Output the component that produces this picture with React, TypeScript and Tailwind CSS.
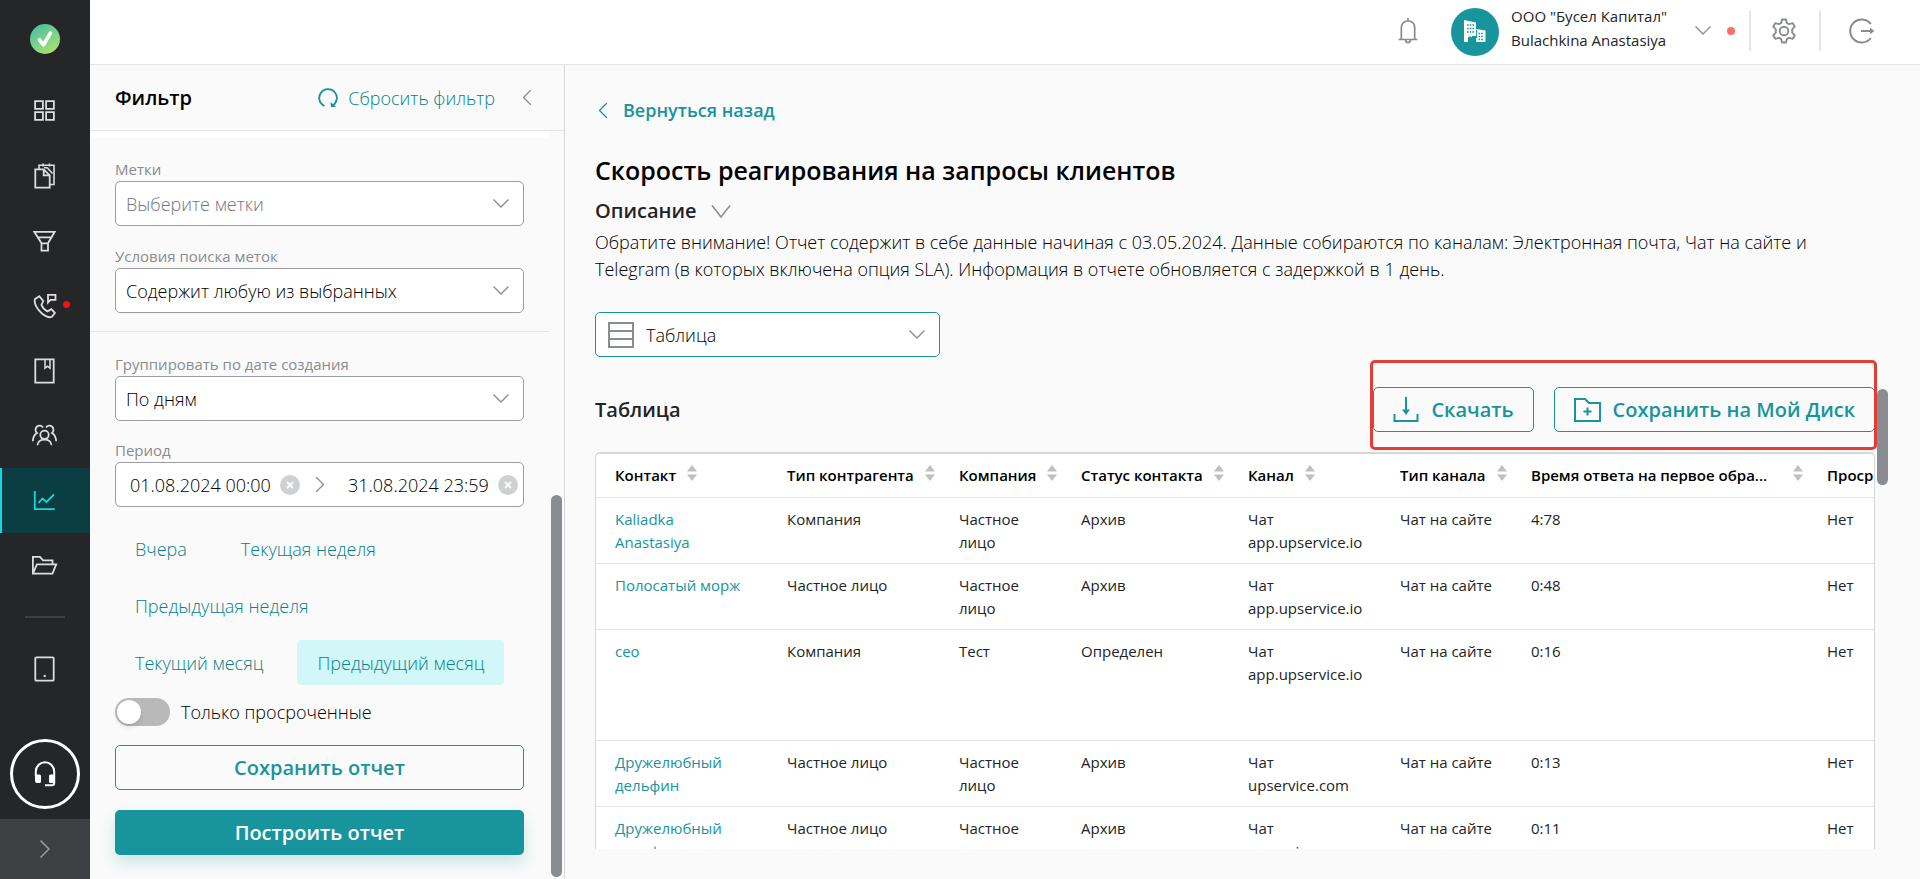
import { useState } from "react";
import type { ReactNode } from "react";

interface Row {
  contact: string;
  kind: string;
  company: string;
  status: string;
  channel: string;
  channelType: string;
  time: string;
  overdue: string;
  tall?: boolean;
}

const rows: Row[] = [
  { contact: "Kaliadka Anastasiya", kind: "Компания", company: "Частное лицо", status: "Архив", channel: "Чат app.upservice.io", channelType: "Чат на сайте", time: "4:78", overdue: "Нет" },
  { contact: "Полосатый морж", kind: "Частное лицо", company: "Частное лицо", status: "Архив", channel: "Чат app.upservice.io", channelType: "Чат на сайте", time: "0:48", overdue: "Нет" },
  { contact: "ceo", kind: "Компания", company: "Тест", status: "Определен", channel: "Чат app.upservice.io", channelType: "Чат на сайте", time: "0:16", overdue: "Нет", tall: true },
  { contact: "Дружелюбный дельфин", kind: "Частное лицо", company: "Частное лицо", status: "Архив", channel: "Чат upservice.com", channelType: "Чат на сайте", time: "0:13", overdue: "Нет" },
  { contact: "Дружелюбный дельфин", kind: "Частное лицо", company: "Частное лицо", status: "Архив", channel: "Чат upservice.com", channelType: "Чат на сайте", time: "0:11", overdue: "Нет" },
];

const columns = [
  { title: "Контакт", width: "w-[172px]" },
  { title: "Тип контрагента", width: "w-[172px]" },
  { title: "Компания", width: "w-[122px]" },
  { title: "Статус контакта", width: "w-[167px]" },
  { title: "Канал", width: "w-[152px]" },
  { title: "Тип канала", width: "w-[131px]" },
  { title: "Время ответа на первое обра...", width: "w-[296px]", spread: true },
  { title: "Просрочено", width: "w-[160px]" },
];

const periodRows = [["Вчера", "Текущая неделя"], ["Предыдущая неделя"], ["Текущий месяц", "Предыдущий месяц"]];

function Chevron({ className = "" }: { className?: string }) {
  return (
    <svg viewBox="0 0 16 9" fill="none" stroke="currentColor" strokeWidth="1.3" className={className} aria-hidden="true">
      <path d="M.5.5 8 8 15.5.5" />
    </svg>
  );
}

function NavIcon({ children }: { children: ReactNode }) {
  return (
    <svg width="26" height="26" viewBox="0 0 26 26" fill="none" stroke="currentColor" strokeWidth="1.8" aria-hidden="true">
      {children}
    </svg>
  );
}

const navItems: { label: string; icon: ReactNode; active?: boolean; dot?: boolean }[] = [
  {
    label: "Рабочий стол",
    icon: (
      <path d="M3.1 3.1h7.8v7.8H3.1zM14.1 3.1h7.8v7.8h-7.8zM3.1 14.1h7.8v7.8H3.1zM14.1 14.1h7.8v7.8h-7.8z" />
    ),
  },
  {
    label: "Задачи",
    icon: (
      <>
        <path d="M3.3 6.3h8.4l6 6v12.4H3.3zM11.7 6.3v6h6" />
        <path d="M7 6V2.3h15v19.2h-4M11 .5v3M17.5.5v3M12 4.5l3.500.5 5 5.500" strokeWidth="1.6" />
      </>
    ),
  },
  {
    label: "Воронка",
    icon: <path d="M2.3 3.8h20.4L16 15.3v7.4H9.5v-7.4zM5.5 9.3h14M9 15.3h7.5" />,
  },
  {
    label: "Обращения",
    dot: true,
    icon: (
      <>
        <path d="M7.3 3.3 2.9 6.2C1.6 10 5.2 16.3 9.4 20c3.9 3.3 8 5 10.6 3.8l2.9-3.9-3.5-3.8-4 2.3c-2.6-1.3-5.1-4-6-6.6l1.9-3.6z" />
        <path d="M16 9.5V1.8h7.5v5h-5z" />
      </>
    ),
  },
  {
    label: "Справочник",
    icon: (
      <>
        <path d="M3.3 1.3h18.4v23.4H3.3z" />
        <path d="M13 1.5v8.7l2.5-2 2.5 2V1.5" strokeWidth="1.5" />
      </>
    ),
  },
  {
    label: "Команда",
    icon: (
      <>
        <circle cx="12.5" cy="11.8" r="4.2" />
        <path d="M5.5 22.3c.2-3.6 3.2-5.8 7-5.8s6.8 2.2 7 5.8" />
        <path d="M11 4.6C9.7 2.3 6.8 2 5 3.5c-2 1.7-2 4.7 0 6.5-2.5 1.5-4 4.500-4.200 8.200M14 4.600c1.300-2.300 4.200-2.600 6-1.100 2 1.700 2 4.700 0 6.500 2.500 1.500 4 4.500 4.200 8.200" />
      </>
    ),
  },
  {
    label: "Аналитика",
    active: true,
    icon: <path d="M2.8 3v18.2h20M6.5 15l4-4.5 4 3.5 7.5-7.5" />,
  },
  {
    label: "Диск",
    icon: <path d="M.9 20.7V3.8H8l3 3.5h9.5v4M.9 20.7l4-9.4h19.3l-3.7 9.4z" />,
  },
];

function Sidebar() {
  return (
    <aside className="flex w-[90px] shrink-0 flex-col bg-[#242628] text-[#dcdde0]">
      <div className="flex h-[78px] items-center justify-center">
        <svg width="30" height="30" viewBox="0 0 30 30" aria-label="Upservice">
          <defs>
            <linearGradient id="logo" x1="0.2" y1="0" x2="0.8" y2="1">
              <stop offset="0" stopColor="#45bfa4" />
              <stop offset="1" stopColor="#b0e36b" />
            </linearGradient>
          </defs>
          <circle cx="15" cy="15" r="15" fill="url(#logo)" />
          <path d="m9.5 16 4 4.8L20.5 9" fill="none" stroke="#fff" strokeWidth="3.6" strokeLinecap="round" strokeLinejoin="round" />
        </svg>
      </div>
      <nav>
        {navItems.map((item) => (
          <a
            key={item.label}
            href="#"
            aria-label={item.label}
            className={`relative flex h-[65px] items-center justify-center ${
              item.active ? "border-l-2 border-[#1bd5dd] bg-[#0b3e42] pr-0.5 text-[#1bd5dd]" : ""
            }`}
          >
            <NavIcon>{item.icon}</NavIcon>
            {item.dot && <span className="absolute top-7 right-5 size-[7px] rounded-full bg-[#fb0f0f]" />}
          </a>
        ))}
        <hr className="mx-auto mt-[18px] w-10 border-t-2 border-[#3e3f43]" />
        <a href="#" aria-label="Приложение" className="mt-[18px] flex h-[65px] items-center justify-center">
          <NavIcon>
            <rect x="3.3" y="1.3" width="18.4" height="23.4" rx="1" />
            <path d="M11.7 20h2" strokeWidth="2.2" />
          </NavIcon>
        </a>
      </nav>
      <div className="mt-auto flex justify-center pb-[10px]">
        <button aria-label="Поддержка" className="flex size-[70px] items-center justify-center rounded-full border-3 border-white text-white">
          <svg width="22" height="26" viewBox="0 0 22 26" fill="none" stroke="currentColor" aria-hidden="true">
            <path d="M1.8 15v-4.500a9.200 9.200 0 0 1 18.400 0V22q0 2.300-2.500 2.300H11" strokeWidth="2" />
            <path d="M1 13.500h4.500q1.500 0 1.500 1.500v5.500q0 1.500-1.500 1.500H3q-2 0-2-2.500zM21 13.500h-4.500q-1.500 0-1.500 1.500v5.500q0 1.500 1.500 1.500H21z" fill="currentColor" stroke="none" />
          </svg>
        </button>
      </div>
      <button aria-label="Развернуть меню" className="flex h-[60px] items-center justify-center bg-[#3e3f43] text-[#9a9ca1]">
        <Chevron className="w-[18px] -rotate-90" />
      </button>
    </aside>
  );
}

function Header() {
  return (
    <header className="flex h-[65px] shrink-0 items-center justify-end border-b border-[#e4e5e6] bg-white pr-[45px] pb-[3px] text-[#898c90]">
      <button aria-label="Уведомления">
        <svg width="20" height="26" viewBox="0 0 20 26" fill="none" stroke="currentColor" strokeWidth="1.7" aria-hidden="true">
          <path d="M10 0v3M3.3 21V10C3.3 5.5 6 3 10 3s6.700 2.500 6.700 7v11M.5 21.500h19M7.500 22c0 3.500 5 3.500 5 0" />
        </svg>
      </button>
      <span className="mt-[3px] ml-[33px] flex size-12 items-center justify-center rounded-full bg-[#18949c]">
        <svg width="24" height="24" viewBox="0 0 24 24" aria-hidden="true">
          <path d="M1 0l12 2.500V9l9.500 1.500V22H13v-6H9v6H1z" fill="#fff" />
          <path d="M4 5h7M4 8.500h7M4 12h7M15.500 13.500h5.500M15.500 16.500h5.500M15.500 19.500h5.500" stroke="#18949c" strokeWidth="1.5" strokeDasharray="1.6 1.1" />
          <path d="M13.500 10v8" stroke="#18949c" strokeWidth="1" />
          <path d="M5 22v-4q0-1.500 1.500-1.500h1q1.500 0 1.500 1.500v4z" fill="#18949c" />
        </svg>
      </span>
      <div className="ml-3 pb-1.5 text-[15px] leading-6 text-[#222426]">
        <p>ООО "Бусел Капитал"</p>
        <p>Bulachkina Anastasiya</p>
      </div>
      <button aria-label="Сменить компанию" className="ml-7">
        <Chevron className="w-4" />
      </button>
      <span className="ml-4 size-2 rounded-full bg-[#ff6d69]" />
      <span className="ml-[14px] h-10 w-0.5 bg-[#e4e5e6]" />
      <button aria-label="Настройки" className="ml-5">
        <svg width="26" height="26" viewBox="0 0 26 26" fill="none" stroke="currentColor" strokeWidth="1.9" strokeLinejoin="round" aria-hidden="true">
          <circle cx="13" cy="13" r="4.3" />
          <path d="M11 1.5h4l.8 3.4 2.2 1.300 3.800-1 2 3.500-2.600 2.600v3.400l2.600 2.600-2 3.500-3.800-1-2.200 1.300-.8 3.400h-4l-.8-3.400L8 19.800l-3.800 1-2-3.500 2.600-2.600v-3.400L2.200 8.700l2-3.500 3.800 1 2.200-1.300z" />
        </svg>
      </button>
      <span className="ml-[22px] h-10 w-0.5 bg-[#e4e5e6]" />
      <button aria-label="Выйти" className="ml-7">
        <svg width="26" height="26" viewBox="0 0 26 26" fill="none" stroke="currentColor" strokeWidth="2" aria-hidden="true">
          <path d="M21.800 6a11.500 11.500 0 1 0 0 14M12 13h11" />
          <path d="m21 9.800 4.500 3.200-4.500 3.200z" fill="currentColor" stroke="none" />
        </svg>
      </button>
    </header>
  );
}

function SelectField({ id, label, value, muted }: { id: string; label: string; value: string; muted?: boolean }) {
  return (
    <div>
      <label htmlFor={id} className="block text-[15px] leading-6 text-[#898c90]">
        {label}
      </label>
      <div className="relative">
        <select
          id={id}
          className={`h-[45px] w-full appearance-none rounded-[5px] border border-[#9a9ca0] bg-white px-[10px] text-lg font-light ${
            muted ? "text-[#73767a]" : "text-black"
          }`}
        >
          <option>{value}</option>
        </select>
        <Chevron className="pointer-events-none absolute top-[18px] right-[15px] w-4 text-[#898c90]" />
      </div>
    </div>
  );
}

function ClearButton() {
  return (
    <button aria-label="Очистить" className="flex size-5 shrink-0 items-center justify-center rounded-full bg-[#cfd0d2]">
      <svg width="8" height="8" viewBox="0 0 8 8" stroke="#fff" strokeWidth="1.8" aria-hidden="true">
        <path d="m1 1 6 6M7 1 1 7" />
      </svg>
    </button>
  );
}

function FilterPanel() {
  const [period, setPeriod] = useState("Предыдущий месяц");
  const [from, setFrom] = useState("01.08.2024 00:00");
  const [to, setTo] = useState("31.08.2024 23:59");

  return (
    <section className="relative flex w-[475px] shrink-0 flex-col border-r border-[#d6d7d9]">
      <div className="flex h-[66px] shrink-0 items-center border-b border-[#e4e5e6] pr-[29px] pl-[25px]">
        <h2 className="text-xl font-semibold text-black">Фильтр</h2>
        <button className="ml-auto flex items-center gap-[10px] text-lg font-light text-[#04838b]">
          <svg width="20" height="20" viewBox="0 0 20 20" fill="none" stroke="#18949c" strokeWidth="1.8" aria-hidden="true">
            <path d="M6.500 18A8.800 8.800 0 1 1 14 17.800" />
            <path d="m12.500 14 .5 5h5z" fill="#18949c" stroke="none" />
          </svg>
          Сбросить фильтр
        </button>
        <button aria-label="Свернуть фильтр" className="ml-6 text-[#898c90]">
          <Chevron className="w-4 rotate-90" />
        </button>
      </div>

      <div className="mr-[15px] h-[7px] shrink-0 bg-white" />
      <div className="mr-[15px] border-b border-[#e4e5e6] pt-[19px] pb-[18px]">
        <div className="flex flex-col gap-[18px] pr-[25px] pl-[25px]">
          <SelectField id="tags" label="Метки" value="Выберите метки" muted />
          <SelectField id="tag-mode" label="Условия поиска меток" value="Содержит любую из выбранных" />
        </div>
      </div>

      <div className="pt-5 pr-10 pl-[25px]">
        <SelectField id="group-by" label="Группировать по дате создания" value="По дням" />

        <label htmlFor="date-from" className="mt-[17px] block text-[15px] leading-6 text-[#898c90]">
          Период
        </label>
        <div className="flex h-[45px] items-center rounded-[5px] border border-[#9a9ca0] bg-white pr-[5px] pl-[14px] text-black">
          <input id="date-from" value={from} onChange={(e) => setFrom(e.target.value)} className="w-[150px] text-lg font-light outline-none" />
          <ClearButton />
          <Chevron className="ml-3 w-4 -rotate-90 text-[#898c90]" />
          <input aria-label="Конец периода" value={to} onChange={(e) => setTo(e.target.value)} className="ml-5 w-[150px] min-w-0 flex-1 text-lg font-light outline-none" />
          <ClearButton />
        </div>

        <div className="mt-[19px] flex flex-col gap-3">
          {periodRows.map((group) => (
            <div key={group[0]} className="flex gap-[14px]">
              {group.map((p) => (
                <button
                  key={p}
                  onClick={() => setPeriod(p)}
                  className={`h-[45px] rounded-[5px] px-5 text-lg font-light text-[#04838b] ${p === period ? "bg-[#d1f7f9]" : ""}`}
                >
                  {p}
                </button>
              ))}
            </div>
          ))}
        </div>

        <label className="mt-[13px] flex items-center gap-[11px] text-lg font-light text-black">
          <input
            type="checkbox"
            role="switch"
            className="h-7 w-[55px] appearance-none rounded-full bg-[#b9b9b9] p-0.5 before:block before:size-6 before:rounded-full before:bg-white before:shadow-md checked:bg-[#18949c] checked:before:ml-auto"
          />
          Только просроченные
        </label>

        <button className="mt-[19px] h-[45px] w-full rounded-[5px] border border-[#18949c] text-xl font-semibold text-[#18949c]">
          Сохранить отчет
        </button>
        <button className="mt-5 h-[45px] w-full rounded-[5px] bg-[#18949c] text-xl font-semibold text-white shadow-[0_8px_16px_rgba(24,148,156,0.2)]">
          Построить отчет
        </button>
      </div>
      <div className="absolute right-0.5 bottom-0.5 h-[382px] w-[11px] rounded-full bg-[#898c90]" />
    </section>
  );
}

function SortIcon() {
  return (
    <svg width="10" height="16" viewBox="0 0 10 16" fill="#bfbfbf" className="mb-1 shrink-0" aria-hidden="true">
      <path d="M5 0l5 6.500H0zM5 16l5-6.500H0z" />
    </svg>
  );
}

function ReportTable() {
  return (
    <div className="overflow-hidden rounded-t-[5px] border border-t-2 border-b-0 border-[#d6d7d9] bg-white">
      <table className="w-[1372px] table-fixed border-collapse text-left text-[15px] leading-[23px] text-[#222426]">
        <thead>
          <tr className="h-[43px] border-b border-[#e4e5e6]">
            {columns.map((col) => (
              <th key={col.title} className={`${col.width} pl-[19px] font-semibold whitespace-nowrap text-black`}>
                <div className={`flex items-center gap-[11px] ${col.spread ? "justify-between pr-[5px]" : ""}`}>
                  {col.title}
                  <SortIcon />
                </div>
              </th>
            ))}
          </tr>
        </thead>
        <tbody>
          {rows.map((row, i) => (
            <tr key={i} className={`border-b border-[#e4e5e6] align-top ${row.tall ? "h-[111px]" : "h-[66px]"}`}>
              <td className="pt-[10px] pr-6 pb-[9px] pl-[19px]">
                <a href="#" className="text-[#18949c]">{row.contact}</a>
              </td>
              <td className="pt-[10px] pb-[9px] pl-[19px]">{row.kind}</td>
              <td className="pt-[10px] pr-6 pb-[9px] pl-[19px]">{row.company}</td>
              <td className="pt-[10px] pb-[9px] pl-[19px]">{row.status}</td>
              <td className="pt-[10px] pr-4 pb-[9px] pl-[19px]">{row.channel}</td>
              <td className="pt-[10px] pb-[9px] pl-[19px]">{row.channelType}</td>
              <td className="pt-[10px] pb-[9px] pl-[19px]">{row.time}</td>
              <td className="pt-[10px] pb-[9px] pl-[19px]">{row.overdue}</td>
            </tr>
          ))}
        </tbody>
      </table>
    </div>
  );
}

function Report() {
  return (
    <main className="relative min-w-0 flex-1 pt-[31px] pr-[45px] pb-[30px] pl-[30px]">
      <div className="h-full overflow-hidden">
        <a href="#" className="flex items-center gap-3 text-lg font-semibold text-[#18949c]">
          <Chevron className="w-4 rotate-90" />
          Вернуться назад
        </a>
        <h1 className="mt-[26px] text-[25px] leading-10 font-semibold text-black">Скорость реагирования на запросы клиентов</h1>
        <button className="mt-[7px] flex items-center gap-[14px] text-xl font-semibold text-[#222426]">
          Описание
          <svg width="20" height="13" viewBox="0 0 20 13" fill="none" stroke="#898c90" strokeWidth="1.5" aria-hidden="true">
            <path d="M1 .5 10 12 19 .5" />
          </svg>
        </button>
        <p className="mt-1 text-lg leading-[27px] font-light text-black">
          Обратите внимание! Отчет содержит в себе данные начиная с 03.05.2024. Данные собираются по каналам: Электронная почта, Чат на сайте и
          Telegram (в которых включена опция SLA). Информация в отчете обновляется с задержкой в 1 день.
        </p>

        <div className="relative mt-[29px] w-[345px]">
          <svg width="26" height="26" viewBox="0 0 26 26" fill="none" stroke="#898c90" strokeWidth="2" className="pointer-events-none absolute top-[10px] left-[13px]" aria-hidden="true">
            <path d="M1 1h24v24H1zM1 9h24M1 17h24" />
          </svg>
          <select aria-label="Вид отчета" className="h-[45px] w-full appearance-none rounded-[5px] border border-[#18949c] bg-white pl-[50px] text-lg font-light text-black">
            <option>Таблица</option>
          </select>
          <Chevron className="pointer-events-none absolute top-[18px] right-[15px] w-4 text-[#898c90]" />
        </div>

        <div className="mt-[30px] mb-5 flex h-[45px] items-center text-[#18949c]">
          <h2 className="text-xl font-semibold text-[#222426]">Таблица</h2>
          <button className="ml-auto flex h-[45px] items-center gap-3 rounded-[5px] border border-[#18949c] px-[19px] text-xl font-semibold">
            <svg width="26" height="26" viewBox="0 0 26 26" fill="none" stroke="currentColor" strokeWidth="2" aria-hidden="true">
              <path d="M1.500 17v7h23v-7M13 0v14" />
              <path d="m9 12.500h8L13 18z" fill="currentColor" stroke="none" />
            </svg>
            Скачать
          </button>
          <button className="ml-5 flex h-[45px] items-center gap-3 rounded-[5px] border border-[#18949c] px-[19px] text-xl font-semibold">
            <svg width="27" height="24" viewBox="0 0 27 24" fill="none" stroke="currentColor" strokeWidth="2" aria-hidden="true">
              <path d="M1 1h10l4 4h11v18H1zM13.500 9.500v8M9.500 13.500h8" />
            </svg>
            Сохранить на Мой Диск
          </button>
        </div>

        <ReportTable />
      </div>
      {/* highlight around the export buttons */}
      <div className="pointer-events-none absolute top-[295px] right-[43px] h-[90px] w-[507px] rounded-[5px] border-3 border-[#e53c35]" />
      <div className="absolute top-[324px] right-8 h-24 w-[11px] rounded-full bg-[#898c90]" />
    </main>
  );
}

export default function App() {
  return (
    <div className="flex h-screen overflow-hidden bg-[#fafafa] font-['Open_Sans',sans-serif]">
      <Sidebar />
      <div className="flex min-w-0 flex-1 flex-col">
        <Header />
        <div className="flex min-h-0 flex-1">
          <FilterPanel />
          <Report />
        </div>
      </div>
    </div>
  );
}
